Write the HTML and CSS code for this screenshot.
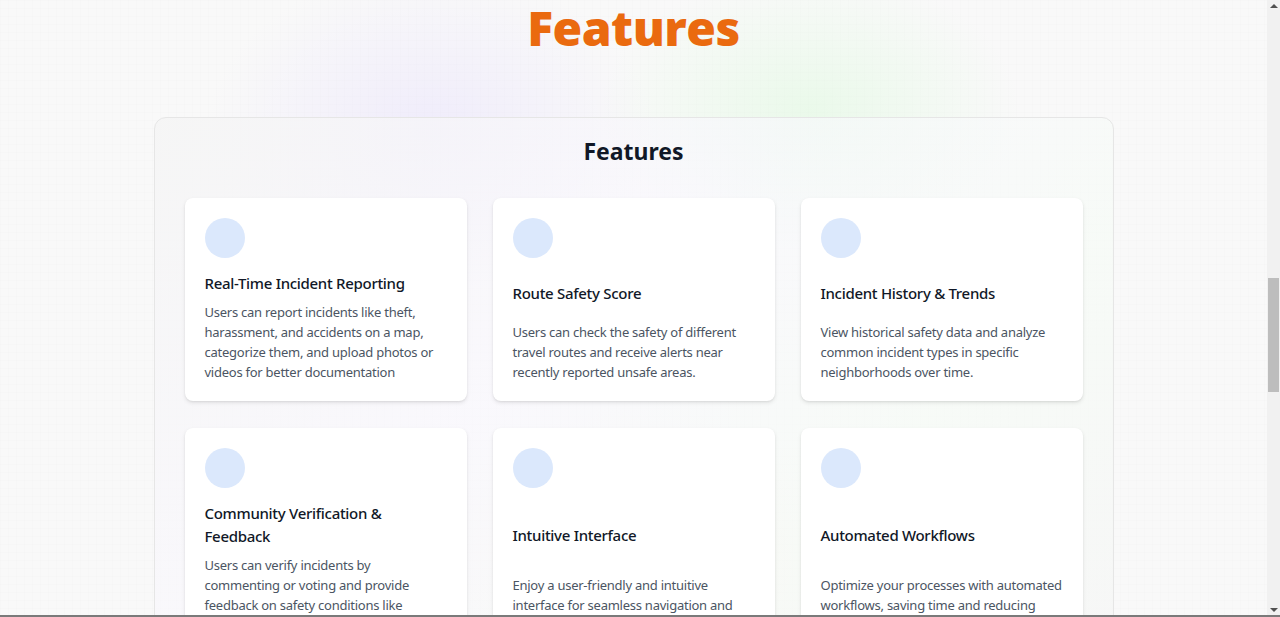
FILE: index.html
```html
<!DOCTYPE html>
<html lang="en">
<head>
<meta charset="utf-8">
<title>Features</title>
<link rel="stylesheet" href="styles.css">
</head>
<body>
<div class="window">
  <main class="page">
    <h1 class="hero-title">Features</h1>
    <section class="panel">
      <h2 class="panel-title">Features</h2>
      <div class="grid">
        <article class="card">
          <div class="icon"></div>
          <h3 class="card-title">Real-Time Incident Reporting</h3>
          <p class="card-text">Users can report incidents like theft, harassment, and accidents on a map, categorize them, and upload photos or videos for better documentation</p>
        </article>
        <article class="card">
          <div class="icon"></div>
          <h3 class="card-title">Route Safety Score</h3>
          <p class="card-text">Users can check the safety of different travel routes and receive alerts near recently reported unsafe areas.</p>
        </article>
        <article class="card">
          <div class="icon"></div>
          <h3 class="card-title">Incident History &amp; Trends</h3>
          <p class="card-text">View historical safety data and analyze common incident types in specific neighborhoods over time.</p>
        </article>
        <article class="card">
          <div class="icon"></div>
          <h3 class="card-title">Community Verification &amp; Feedback</h3>
          <p class="card-text">Users can verify incidents by commenting or voting and provide feedback on safety conditions like lighting and crowd levels.</p>
        </article>
        <article class="card">
          <div class="icon"></div>
          <h3 class="card-title">Intuitive Interface</h3>
          <p class="card-text">Enjoy a user-friendly and intuitive interface for seamless navigation and effortless reporting.</p>
        </article>
        <article class="card">
          <div class="icon"></div>
          <h3 class="card-title">Automated Workflows</h3>
          <p class="card-text">Optimize your processes with automated workflows, saving time and reducing manual effort.</p>
        </article>
      </div>
    </section>
  </main>
  <aside class="scrollbar" aria-hidden="true">
    <span class="arrow arrow-up"></span>
    <span class="track">
      <span class="track-space"></span>
      <span class="thumb"></span>
    </span>
    <span class="arrow arrow-down"></span>
  </aside>
</div>
<div class="frame-edge"></div>
</body>
</html>
```

FILE: styles.css
```css
* { box-sizing: border-box; }
html, body { margin: 0; padding: 0; }
body {
  font-family: "Noto Sans", "Open Sans", sans-serif;
  color: #111827;
  background-color: #f9f9f9;
}
.window {
  display: flex;
  align-items: flex-start;
}
.page {
  flex: 1;
  min-width: 0;
  padding: 0 0 60px;
  min-height: 1200px;
  background-image:
    radial-gradient(ellipse 320px 230px at 430px 130px, rgba(222, 212, 255, 0.35), transparent 70%),
    radial-gradient(ellipse 300px 200px at 810px 110px, rgba(212, 250, 212, 0.4), transparent 70%),
    radial-gradient(ellipse 300px 220px at 640px 560px, rgba(255, 222, 222, 0.3), transparent 70%),
    linear-gradient(rgba(0,0,0,0.006) 1px, transparent 1px),
    linear-gradient(90deg, rgba(0,0,0,0.006) 1px, transparent 1px);
  background-size: auto, auto, auto, 8px 8px, 8px 8px;
}
.hero-title {
  margin: 0;
  height: 117px;
  text-align: center;
  font-family: "Open Sans", sans-serif;
  font-weight: 800;
  font-size: 48px;
  line-height: 56px;
  color: #ea6a0f;
  letter-spacing: -0.5px;
}
.panel {
  width: 960px;
  margin: 0 auto;
  padding: 19px 30px 40px;
  border: 1px solid #e6e6e6;
  border-radius: 12px;
  background: linear-gradient(135deg, rgba(245,245,245,0.9), rgba(250,248,255,0.6) 40%, rgba(246,252,246,0.6) 70%, rgba(246,246,246,0.9));
}
.panel-title {
  margin: 0 0 33px;
  text-align: center;
  font-size: 23px;
  line-height: 28px;
  font-weight: 700;
  color: #111827;
}
.grid {
  display: grid;
  grid-template-columns: repeat(3, 1fr);
  column-gap: 26px;
  row-gap: 27px;
}
.card {
  display: flex;
  flex-direction: column;
  justify-content: space-between;
  background: #ffffff;
  border-radius: 8px;
  padding: 20px 20px 19px;
  box-shadow: 0 2px 4px rgba(0, 0, 0, 0.09), 0 1px 2px rgba(0, 0, 0, 0.06);
}
.icon {
  flex: none;
  width: 40px;
  height: 40px;
  border-radius: 50%;
  background: #dbe8fc;
  margin-bottom: 14px;
}
.card-title {
  margin: 0 0 7px;
  font-size: 15px;
  line-height: 23px;
  font-weight: 500;
  letter-spacing: -0.3px;
  color: #111827;
}
.card-text {
  margin: 0;
  font-size: 13px;
  line-height: 20px;
  letter-spacing: -0.25px;
  color: #4b5563;
}
.scrollbar {
  flex: none;
  width: 13px;
  height: 100vh;
  display: flex;
  flex-direction: column;
  align-items: center;
  background: #f1f1f1;
}
.arrow {
  flex: none;
  width: 0;
  height: 0;
  border-left: 4px solid transparent;
  border-right: 4px solid transparent;
}
.arrow-up {
  margin-top: 4px;
  border-bottom: 4px solid #505050;
}
.arrow-down {
  margin-bottom: 5px;
  border-top: 4px solid #505050;
}
.track {
  flex: 1;
  width: 100%;
  display: flex;
  flex-direction: column;
  align-items: center;
}
.track-space {
  height: 270px;
}
.thumb {
  width: 11px;
  height: 114px;
  background: #bdbdbd;
}
.frame-edge {
  position: fixed;
  left: 0;
  right: 0;
  bottom: 0;
  height: 2px;
  background: #7a7a7a;
}
```
